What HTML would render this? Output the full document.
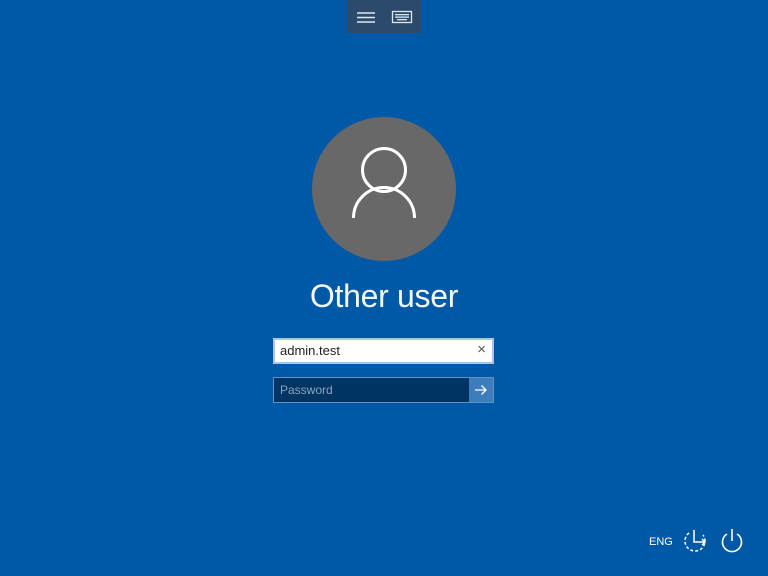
<!DOCTYPE html>
<html><head><meta charset="utf-8"><style>
html,body{margin:0;padding:0;width:768px;height:576px;overflow:hidden;background:#0059a6;font-family:"Liberation Sans",sans-serif;}
.bar{position:absolute;left:347px;top:0;width:74px;height:33px;background:#2c4a6b;}
.name{position:absolute;left:0;width:768px;top:278px;text-align:center;color:#f4f7fb;font-size:32px;font-weight:normal;letter-spacing:-0.3px;}
.u{position:absolute;left:273px;top:338px;width:217px;height:22px;border:2px solid #a9c6e4;background:#fff;}
.u span{position:absolute;left:5px;top:3px;font-size:13px;color:#222;}
.u i{position:absolute;right:6px;top:1px;font-style:normal;font-size:15px;color:#555;}
.p{position:absolute;left:273px;top:377px;width:219px;height:24px;border:1px solid #5f93c8;background:#003462;}
.p span{position:absolute;left:6px;top:5px;font-size:12px;color:#8ca7c2;}
.p b{position:absolute;right:0;top:0;width:24px;height:24px;background:#3d7dbb;}
.eng{position:absolute;left:649px;top:536px;color:#fff;font-size:11px;}
</style></head><body>
<div class="bar">
<svg width="74" height="33" style="position:absolute;left:0;top:0">
<g stroke="#dfe6ee" stroke-width="1.5"><line x1="10" y1="13" x2="28" y2="13"/><line x1="10" y1="17.5" x2="28" y2="17.5"/><line x1="10" y1="22" x2="28" y2="22"/></g>
<rect x="45.5" y="11.5" width="19" height="11" fill="none" stroke="#dfe6ee" stroke-width="1.3"/>
<g fill="#dfe6ee"><rect x="48" y="14" width="14" height="1.3"/><rect x="48" y="16.5" width="14" height="1.3"/><rect x="50" y="19" width="10" height="1.3"/></g>
</svg></div>
<svg width="768" height="300" style="position:absolute;left:0;top:0">
<circle cx="384" cy="189" r="72" fill="#686868"/>
<circle cx="384" cy="170" r="21.5" fill="none" stroke="#fff" stroke-width="3"/>
<path d="M353.5 218 A30.5 30.5 0 0 1 414.5 218" fill="none" stroke="#fff" stroke-width="3"/>
</svg>
<div class="name">Other user</div>
<div class="u"><span>admin.test</span><i>×</i></div>
<div class="p"><span>Password</span><b><svg width="24" height="24"><path d="M6 12H17M12.5 7.5L17 12L12.5 16.5" fill="none" stroke="#fff" stroke-width="1.3"/></svg></b></div>
<div class="eng">ENG</div>
<svg width="768" height="576" style="position:absolute;left:0;top:0;pointer-events:none">
<path d="M689 533 A10 10 0 1 0 703 535" fill="none" stroke="#fff" stroke-width="1.5" stroke-dasharray="3 2"/>
<path d="M694 530V542H705M702 539L705 542L702 545" fill="none" stroke="#fff" stroke-width="1.5"/>
<path d="M727 534 A9.5 9.5 0 1 0 737 534" fill="none" stroke="#fff" stroke-width="1.6"/>
<line x1="732" y1="529" x2="732" y2="541" stroke="#fff" stroke-width="1.6"/>
</svg>
</body></html>
